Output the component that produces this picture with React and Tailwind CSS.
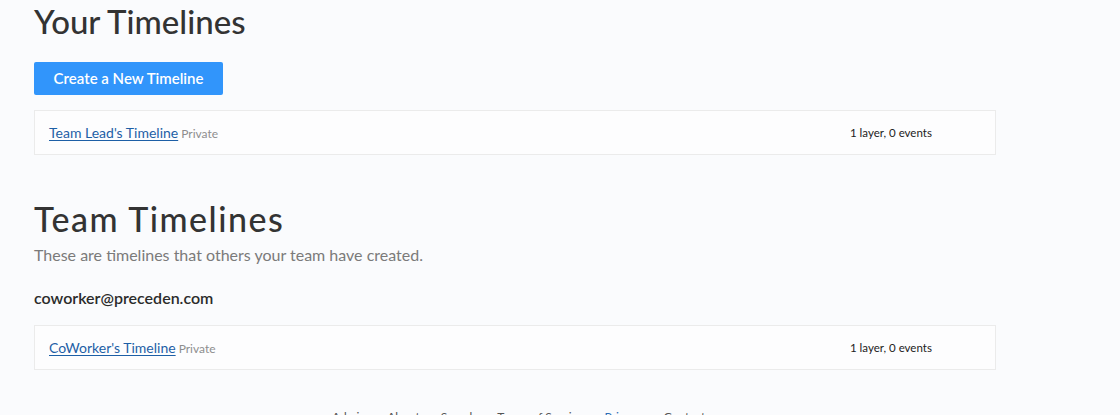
import React from 'react';

const timelineCard = (name, meta, top) => (
  <div className={`${top} flex w-[962px] items-center border border-[#ebebeb] bg-[#fdfdfe] px-[14px] h-[45px]`}>
    <div className="flex-1 flex items-baseline gap-[3px]">
      <a href="#" className="text-[14px] text-[#1d5fa6] underline underline-offset-2">{name}</a>
      <span className="text-[12px] text-[#8e8e8e]">Private</span>
    </div>
    <div className="w-[131px] text-[11.5px] text-[#222]">{meta}</div>
  </div>
);

const App = () => {
  const links = ['Admin', 'About', 'Search', 'Terms of Service', 'Privacy', 'Contact'];

  return (
    <div className="min-h-[415px] bg-[#fafbfd] pl-[34px] text-[#333]" style={{ fontFamily: 'Lato, "Liberation Sans", sans-serif' }}>
      <h1 className="pt-[1px] text-[33px] leading-[40px] font-medium text-[#333]">Your Timelines</h1>

      <button className="mt-[21px] h-[33px] w-[189px] rounded-[2px] bg-[#3195fb] text-[15px] font-semibold text-white">
        Create a New Timeline
      </button>

      {timelineCard("Team Lead's Timeline", '1 layer, 0 events', 'mt-[15px]')}

      <h2 className="mt-[44px] text-[34px] leading-[40px] tracking-[1.5px] font-medium text-[#333]">Team Timelines</h2>
      <p className="mt-[4px] text-[16px] leading-[24px] text-[#7a7a7a]">These are timelines that others your team have created.</p>

      <h3 className="mt-[19px] text-[16px] leading-[24px] font-semibold text-[#2b2b2b]">coworker@preceden.com</h3>

      {timelineCard("CoWorker's Timeline", '1 layer, 0 events', 'mt-[15px]')}

      <div className="mt-[37px] flex gap-[21px] pl-[298px] text-[12px] leading-[20px] text-[#555]">
        {links.map((l) => (
          <a key={l} href="#" className={l === 'Privacy' ? 'text-[#2d6db5]' : ''}>{l}</a>
        ))}
      </div>
    </div>
  );
};

export default App;
